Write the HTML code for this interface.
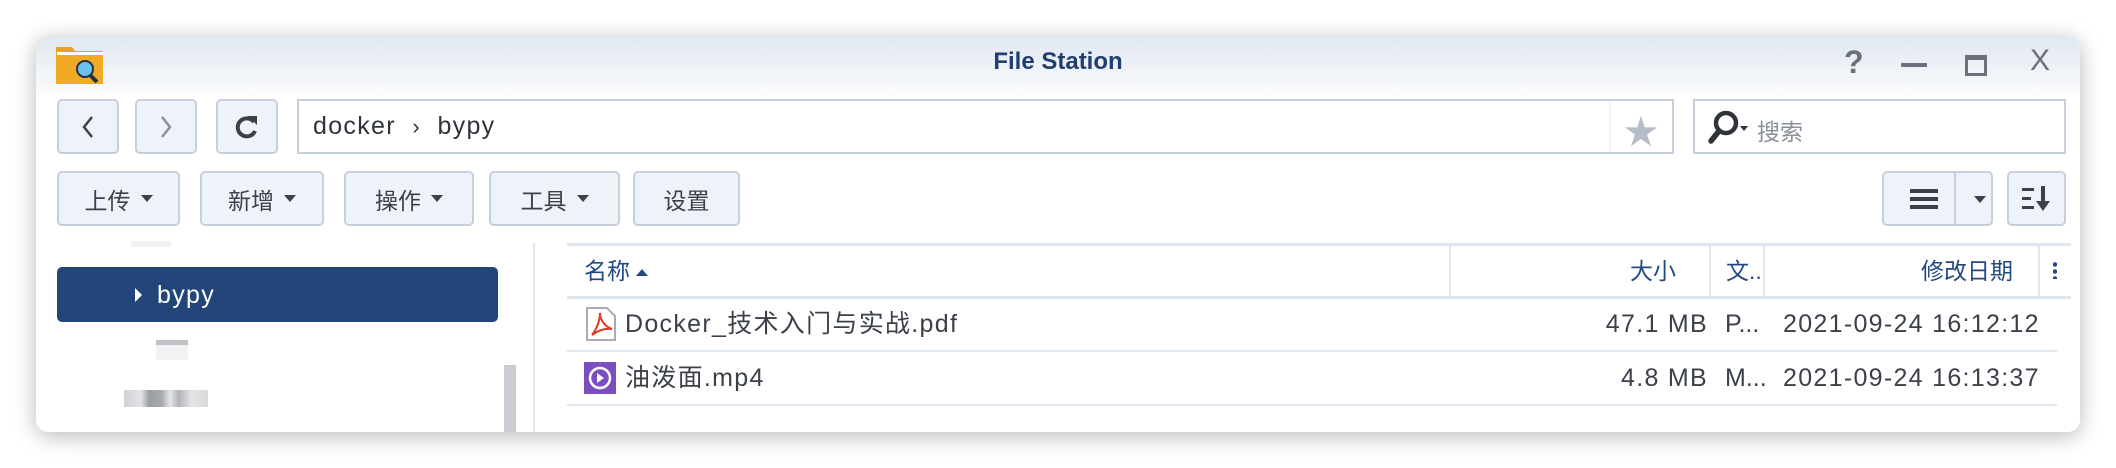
<!DOCTYPE html>
<html><head><meta charset="utf-8"><style>
*{box-sizing:border-box;margin:0;padding:0}
body{width:2116px;height:468px;background:#fff;position:relative;overflow:hidden;font-family:"Liberation Sans","Noto Sans CJK SC",sans-serif;color:#3b4049}
.win{position:absolute;left:36px;top:36px;width:2044px;height:396px;border-radius:12px;background:#fff;box-shadow:0 4px 22px rgba(0,0,0,.28);overflow:hidden}
.tb{position:absolute;left:0;top:0;right:0;height:60px;background:linear-gradient(#e0e7f0,#fbfcfd)}
.a{position:absolute}
.btn{position:absolute;background:#eef3fa;border:2px solid #c6cfdb;border-radius:5px;font-size:23px;color:#3b4049;display:flex;align-items:center;justify-content:center}
.caret{display:inline-block;width:0;height:0;border-left:6px solid transparent;border-right:6px solid transparent;border-top:7px solid #3b4049;margin-left:10px}
.field{position:absolute;border:2px solid #c6cfdb;background:#fff}
.hl{position:absolute;height:2px;background:#dfe6ee}
.vl{position:absolute;width:2px;background:#dfe6ee}
.hd{position:absolute;font-size:23px;color:#234a80;line-height:30px}
.c{position:absolute;font-size:25px;color:#3b4049;line-height:30px;letter-spacing:1.3px;white-space:nowrap}
</style></head><body>
<div class="win">
<div class="tb"></div>
<svg class="a" style="left:19px;top:8px" width="50" height="42" viewBox="0 0 50 42"><path d="M1 3h16l3 4h28v33H1z" fill="#e9a21c"/><rect x="2" y="8" width="46" height="3" fill="#fff"/><path d="M1 11h47v29H1z" fill="#f0aa25"/><circle cx="30" cy="25" r="8" fill="#6cc2ef" stroke="#24313f" stroke-width="2"/><path d="M35 31l7 7" stroke="#24313f" stroke-width="4"/></svg>
<div class="a" style="left:0;width:2044px;top:12px;text-align:center;font-size:24px;font-weight:bold;color:#1f3f6e">File Station</div>
<div class="a" style="left:1808px;top:8px;font-size:32px;font-weight:bold;color:#6b717a">?</div>
<div class="a" style="left:1865px;top:27px;width:26px;height:4px;background:#6b717a"></div>
<div class="a" style="left:1929px;top:19px;width:22px;height:21px;border:3px solid #6b717a;border-top-width:5px"></div>
<div class="a" style="left:1994px;top:8px;font-size:30px;color:#6b717a">X</div>

<div class="btn" style="left:21px;top:63px;width:62px;height:55px"><svg width="18" height="26"><path d="M13 3L5 13l8 10" stroke="#3b4049" stroke-width="2.5" fill="none"/></svg></div>
<div class="btn" style="left:99px;top:63px;width:62px;height:55px"><svg width="18" height="26"><path d="M5 3l8 10-8 10" stroke="#8a9099" stroke-width="2.5" fill="none"/></svg></div>
<div class="btn" style="left:180px;top:63px;width:62px;height:55px"><svg width="26" height="26" viewBox="0 0 26 26"><path d="M20 8A9 9 0 1 0 21 17" stroke="#3b4049" stroke-width="4" fill="none"/><path d="M14 2h9v9z" fill="#3b4049"/></svg></div>
<div class="field" style="left:261px;top:63px;width:1377px;height:55px"><div class="c" style="left:14px;top:10px;color:#2f343b">docker&nbsp; <span style="font-size:22px">&#x203A;</span>&nbsp; bypy</div><div class="a" style="left:1310px;top:0;width:2px;height:51px;background:#eef1f5"></div><div class="a" style="left:1325px;top:4px;font-size:34px;color:#b5bdc8">★</div></div>
<div class="field" style="left:1657px;top:63px;width:373px;height:55px"><svg class="a" style="left:12px;top:8px" width="44" height="38" viewBox="0 0 44 38"><circle cx="19" cy="14" r="10" stroke="#2f343b" stroke-width="4.5" fill="none"/><path d="M12 22L4 32" stroke="#2f343b" stroke-width="5.5" stroke-linecap="round"/><path d="M33 17h8l-4 5z" fill="#2f343b"/></svg><div class="a" style="left:62px;top:12px;font-size:23px;color:#8a9099">搜索</div></div>

<div class="btn" style="left:21px;top:135px;width:123px;height:55px">上传<span class="caret"></span></div>
<div class="btn" style="left:164px;top:135px;width:124px;height:55px">新增<span class="caret"></span></div>
<div class="btn" style="left:308px;top:135px;width:130px;height:55px">操作<span class="caret"></span></div>
<div class="btn" style="left:453px;top:135px;width:131px;height:55px">工具<span class="caret"></span></div>
<div class="btn" style="left:597px;top:135px;width:107px;height:55px">设置</div>
<div class="btn" style="left:1846px;top:135px;width:111px;height:55px;justify-content:flex-start"><svg style="margin-left:26px" width="30" height="24"><rect y="2" width="28" height="4" fill="#3b4049"/><rect y="10" width="28" height="4" fill="#3b4049"/><rect y="18" width="28" height="4" fill="#3b4049"/></svg><div class="a" style="left:70px;top:0;width:2px;height:51px;background:#c6cfdb"></div><span class="caret a" style="left:80px;top:23px"></span></div>
<div class="btn" style="left:1971px;top:135px;width:59px;height:55px"><svg width="30" height="28"><rect y="3" width="12" height="3" fill="#3b4049"/><rect y="12" width="9" height="3" fill="#3b4049"/><rect y="21" width="12" height="3" fill="#3b4049"/><rect x="19" y="1" width="4" height="17" fill="#3b4049"/><path d="M14 16h14l-7 10z" fill="#3b4049"/></svg></div>

<div class="a" style="left:95px;top:205px;width:40px;height:6px;background:#e8e9eb;opacity:.6"></div>
<div class="a" style="left:21px;top:231px;width:441px;height:55px;background:#22467a;border-radius:5px"><span class="a" style="left:78px;top:21px;border-top:7px solid transparent;border-bottom:7px solid transparent;border-left:7px solid #fff"></span><span class="c" style="left:100px;top:13px;color:#fff">bypy</span></div>
<div class="a" style="left:120px;top:304px;width:32px;height:20px;background:linear-gradient(#bfc2c7 0 5px,#f1f2f3 5px)"></div>
<div class="a" style="left:88px;top:354px;width:84px;height:17px;background:linear-gradient(90deg,#d0d2d5,#e3e4e6 20%,#9b9ea3 30%,#a8abaf 45%,#e6e7e8 55%,#b0b3b7 65%,#e3e4e6 80%,#d8dadc)"></div>
<div class="a" style="left:468px;top:329px;width:12px;height:67px;background:#c9ccd0"></div>
<div class="vl" style="left:497px;top:207px;height:189px;background:#e3e6ea"></div>

<div class="hl" style="left:531px;top:207px;width:1504px;height:3px"></div>
<div class="hl" style="left:531px;top:260px;width:1504px;height:3px"></div>
<div class="hl" style="left:531px;top:314px;width:1490px"></div>
<div class="hl" style="left:531px;top:368px;width:1490px"></div>
<div class="vl" style="left:1413px;top:210px;height:50px"></div>
<div class="vl" style="left:1673px;top:210px;height:50px"></div>
<div class="vl" style="left:1727px;top:210px;height:50px"></div>
<div class="vl" style="left:2002px;top:210px;height:50px"></div>
<div class="hd" style="left:548px;top:220px">名称 <span style="display:inline-block;border-left:6px solid transparent;border-right:6px solid transparent;border-bottom:7px solid #234a80;vertical-align:middle"></span></div>
<div class="hd" style="left:1594px;top:220px">大小</div>
<div class="hd" style="left:1690px;top:220px">文..</div>
<div class="hd" style="left:1885px;top:220px">修改日期</div>
<div class="a" style="left:2017px;top:225px;width:4px;height:18px;background:radial-gradient(circle,#234a80 2px,transparent 2.5px) 0 0/4px 7px"></div>

<svg class="a" style="left:550px;top:271px" width="30" height="34" viewBox="0 0 30 34"><path d="M1 1h20l8 8v24H1z" fill="#fff" stroke="#a6adb6" stroke-width="2"/><path d="M6 28c4-5 8-14 8-22 0 8 6 14 12 16-7-1-13 1-20 6z" stroke="#e03a1e" stroke-width="2" fill="none"/></svg>
<div class="c" style="left:589px;top:273px">Docker_技术入门与实战.pdf</div>
<div class="c" style="right:372px;top:273px">47.1 MB</div>
<div class="c" style="left:1689px;top:273px;letter-spacing:0">P...</div>
<div class="c" style="left:1747px;top:273px">2021-09-24 16:12:12</div>

<svg class="a" style="left:548px;top:326px" width="32" height="32"><rect width="32" height="32" fill="#7b4fbf"/><circle cx="16" cy="16" r="10" stroke="#fff" stroke-width="2.5" fill="none"/><path d="M13 11l7 5-7 5z" fill="#fff"/></svg>
<div class="c" style="left:589px;top:327px">油泼面.mp4</div>
<div class="c" style="right:372px;top:327px">4.8 MB</div>
<div class="c" style="left:1689px;top:327px;letter-spacing:0">M...</div>
<div class="c" style="left:1747px;top:327px">2021-09-24 16:13:37</div>
</div>
</body></html>
